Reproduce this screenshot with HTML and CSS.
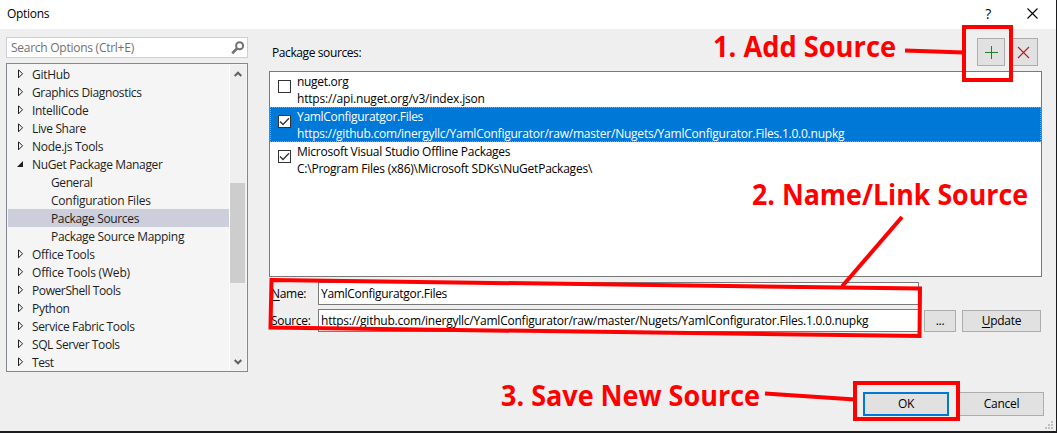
FILE: index.html
```html
<!DOCTYPE html>
<html lang="en">
<head>
<meta charset="utf-8">
<title>Options</title>
<link rel="stylesheet" href="styles.css">
</head>
<body>
<div class="dialog">
  <header class="titlebar">
    <span class="title">Options</span>
    <span class="help">?</span>
    <svg class="close" width="11" height="11" viewBox="0 0 11 11"><path d="M.5 .5l10 10M10.500 .5l-10 10"/></svg>
  </header>
  <main class="content">
    <aside class="sidebar">
      <div class="search">
        <span class="t-search">Search Options (Ctrl+E)</span>
        <svg width="14" height="14" viewBox="0 0 14 14"><circle cx="8.600" cy="4.700" r="3.500"/><path d="M6 7.500L1.200 12.300"/></svg>
      </div>
      <div class="tree">
        <ul class="nodes">
          <li><svg class="arrow" viewBox="0 0 6 10"><path d="M.5 .8v8l4-4z"/></svg><span>GitHub</span></li>
          <li><svg class="arrow" viewBox="0 0 6 10"><path d="M.5 .8v8l4-4z"/></svg><span class="tight">Graphics Diagnostics</span></li>
          <li><svg class="arrow" viewBox="0 0 6 10"><path d="M.5 .8v8l4-4z"/></svg><span>IntelliCode</span></li>
          <li><svg class="arrow" viewBox="0 0 6 10"><path d="M.5 .8v8l4-4z"/></svg><span class="tight">Live Share</span></li>
          <li><svg class="arrow" viewBox="0 0 6 10"><path d="M.5 .8v8l4-4z"/></svg><span>Node.js Tools</span></li>
          <li><svg class="arrow open" viewBox="0 0 6 6"><path d="M6 0v6H0z"/></svg><span class="tight">NuGet Package Manager</span></li>
          <li class="child"><span class="tighter">General</span></li>
          <li class="child"><span class="loose">Configuration Files</span></li>
          <li class="child selected"><span class="tight">Package Sources</span></li>
          <li class="child"><span>Package Source Mapping</span></li>
          <li><svg class="arrow" viewBox="0 0 6 10"><path d="M.5 .8v8l4-4z"/></svg><span class="loose">Office Tools</span></li>
          <li><svg class="arrow" viewBox="0 0 6 10"><path d="M.5 .8v8l4-4z"/></svg><span class="looser">Office Tools (Web)</span></li>
          <li><svg class="arrow" viewBox="0 0 6 10"><path d="M.5 .8v8l4-4z"/></svg><span class="tighter">PowerShell Tools</span></li>
          <li><svg class="arrow" viewBox="0 0 6 10"><path d="M.5 .8v8l4-4z"/></svg><span>Python</span></li>
          <li><svg class="arrow" viewBox="0 0 6 10"><path d="M.5 .8v8l4-4z"/></svg><span class="tight">Service Fabric Tools</span></li>
          <li><svg class="arrow" viewBox="0 0 6 10"><path d="M.5 .8v8l4-4z"/></svg><span class="tighter">SQL Server Tools</span></li>
          <li><svg class="arrow" viewBox="0 0 6 10"><path d="M.5 .8v8l4-4z"/></svg><span class="tighter">Test</span></li>
        </ul>
        <div class="scrollbar">
          <svg width="8" height="6" viewBox="0 0 8 6"><path d="M.7 5L4 1.700 7.300 5"/></svg>
          <div class="thumb"></div>
          <svg width="8" height="6" viewBox="0 0 8 6"><path d="M.7 1L4 4.300 7.300 1"/></svg>
        </div>
      </div>
    </aside>
    <section class="panel">
      <div class="toolbar">
        <span class="label tighter">Package sources:</span>
        <button class="tool add"><svg width="13" height="13" viewBox="0 0 13 13"><path d="M6.500 0v13M0 6.500h13"/></svg></button>
        <button class="tool remove"><svg width="13" height="13" viewBox="0 0 13 13"><path d="M1 1l11 11M12 1L1 12"/></svg></button>
      </div>
      <div class="sources">
        <div class="source">
          <span class="check"></span>
          <div class="lines"><span>nuget.org</span><span class="looser">https://api.nuget.org/v3/index.json</span></div>
        </div>
        <div class="source active">
          <span class="check"><svg width="11" height="11" viewBox="0 0 11 11"><path d="M1 5.500L4 8.500 10 2.300"/></svg></span>
          <div class="lines"><span>YamlConfiguratgor.Files</span><span class="link">https://github.com/inergyllc/YamlConfigurator/raw/master/Nugets/YamlConfigurator.Files.1.0.0.nupkg</span></div>
        </div>
        <div class="source">
          <span class="check"><svg width="11" height="11" viewBox="0 0 11 11"><path d="M1 5.500L4 8.500 10 2.300"/></svg></span>
          <div class="lines"><span class="loose">Microsoft Visual Studio Offline Packages</span><span class="link">C:\Program Files (x86)\Microsoft SDKs\NuGetPackages\</span></div>
        </div>
      </div>
      <div class="form">
        <span class="label"><span><u>N</u>ame:</span></span>
        <div class="field"><span>YamlConfiguratgor.Files</span></div>
        <span class="label second"><span><u>S</u>ource:</span></span>
        <div class="field"><span class="link">https://github.com/inergyllc/YamlConfigurator/raw/master/Nugets/YamlConfigurator.Files.1.0.0.nupkg</span></div>
        <button class="btn dots">...</button>
        <button class="btn update"><span><u>U</u>pdate</span></button>
      </div>
      <footer class="actions">
        <button class="btn ok">OK</button>
        <button class="btn cancel">Cancel</button>
      </footer>
    </section>
  </main>
  <svg class="grip" width="8" height="8" viewBox="0 0 8 8"><path d="M6 0h2v2H6zM3 3h2v2H3zM6 3h2v2H6zM0 6h2v2H0zM3 6h2v2H3zM6 6h2v2H6z"/></svg>
  <svg class="callouts" width="1057" height="433" viewBox="0 0 1057 433">
    <g class="strokes">
      <rect x="964" y="27" width="47" height="53"/>
      <path d="M905 50.500L964 52.500"/>
      <path d="M271.500 280L920 288.500 919.500 336 270.500 327.500z"/>
      <path d="M902 217L842 286.500"/>
      <rect x="855" y="383" width="103" height="36"/>
      <path d="M765 393.500L855 399.500"/>
    </g>
    <text x="713" y="57" textLength="183" lengthAdjust="spacingAndGlyphs">1. Add Source</text>
    <text x="752" y="205" textLength="276" lengthAdjust="spacingAndGlyphs">2. Name/Link Source</text>
    <text x="501" y="406" textLength="259" lengthAdjust="spacingAndGlyphs">3. Save New Source</text>
  </svg>
</div>
</body>
</html>
```
FILE: styles.css
```css
* { box-sizing: border-box; }
body { margin: 0; overflow: hidden; background: #1c1c1f; }
.dialog {
  position: relative;
  width: 1057px; height: 433px;
  display: flex; flex-direction: column;
  border-right: 1px solid #1c1c1f;
  border-bottom: 2px solid #1c1c1f;
  background: #efefef;
  font: 12px/16px "Open Sans", "Noto Sans", sans-serif;
  letter-spacing: -0.3px;
  color: #000;
}
span { white-space: nowrap; }
.loose { letter-spacing: -0.25px; }
.looser { letter-spacing: -0.18px; }
.link { letter-spacing: -0.23px; }
.tight { letter-spacing: -0.35px; }
.tighter { letter-spacing: -0.4px; }

.titlebar {
  height: 29px; flex: none;
  display: flex; align-items: center;
  padding: 0 18px 2px 7px;
  background: #fff;
}
.title { flex: 1; }
.help { margin-right: 36px; font-size: 14px; }
.close { fill: none; stroke: #000; stroke-width: 1.1; }
.content { flex: 1; display: flex; padding: 8px 14px 0 6px; gap: 21px; }

.sidebar { flex: none; width: 242px; display: flex; flex-direction: column; gap: 5px; }
.search {
  height: 21px;
  display: flex; align-items: center; justify-content: space-between;
  padding: 0 2px 0 4px;
  border: 1px solid #cccedb; background: #fff; color: #717171;
}
.search span { padding-top: 1px; letter-spacing: -0.26px; }
.search svg { fill: none; stroke: #717171; stroke-width: 2; }
.search svg path { stroke-width: 2.6; }
.tree {
  height: 309px;
  display: flex;
  padding: 1px;
  border: 1px solid #828790; background: #f5f5f5;
  color: #1e1e1e;
}
.nodes { flex: 1; margin: 0; padding: 0; list-style: none; }
.nodes li { height: 18px; display: flex; align-items: center; padding-left: 10px; }
.nodes span { padding-top: 2px; }
.arrow { width: 6px; height: 10px; margin-right: 8px; fill: none; stroke: #1e1e1e; }
.arrow.open { height: 6px; margin: 0 9px 0 -1px; fill: #1e1e1e; stroke: none; }
.nodes .child { padding-left: 43px; }
.nodes .selected { background: #cccedb; }
.scrollbar {
  width: 17px;
  display: flex; flex-direction: column; align-items: center;
  padding: 6px 1px 5px 0;
  border-left: 1px solid #fff; background: #efefef;
}
.scrollbar svg { fill: none; stroke: #606060; stroke-width: 2; }
.thumb { width: 15px; height: 100px; margin: 106px 0 auto; background: #cdcdcd; }

.panel { flex: 1; min-width: 0; display: flex; flex-direction: column; }
.toolbar { height: 34px; display: flex; padding: 1px 4px 0 3px; }
.toolbar .label { flex: 1; padding-top: 7px; }
.tool {
  width: 28px; height: 28px; padding: 0; margin-left: 5px;
  display: flex; align-items: center; justify-content: center;
  border: 1px solid #adadad; background: #e1e1e1;
}
.tool svg { fill: none; stroke: #1e8022; stroke-width: 1; }
.remove svg { stroke: #b4232f; stroke-width: 1.200; margin-left: -2px; }
.sources { width: 773px; height: 206px; border: 1px solid #7a7a7a; background: #fff; }
.source { height: 35px; display: flex; padding-left: 8px; gap: 6px; }
.active { background: #0078d7; color: #fff; outline: 1px dotted #f08a28; outline-offset: -1px; }
.check { width: 13px; height: 13px; margin-top: 8px; border: 1px solid #333; background: #fff; }
.check svg { display: block; fill: none; stroke: #333; stroke-width: 1.300; }
.lines { display: flex; flex-direction: column; padding-top: 1px; line-height: 17px; }

.form {
  margin-top: 5px;
  display: grid;
  grid-template-columns: 49px 601px 37px 85px;
  grid-template-rows: 23px 23px;
  row-gap: 4px;
}
.form .label { grid-column: 1; padding: 4px 0 0 2px; }
.field { grid-column: 2; height: 23px; padding: 3px 2px 2px; border: 1px solid #7a7a7a; background: #fff; }
.btn {
  padding: 0;
  border: 1px solid #adadad; background: #e1e1e1;
  font: inherit; letter-spacing: inherit; color: #000;
}
.dots { grid-area: 2 / 3; width: 32px; height: 22px; margin: 1px 0 0 5px; }
.update { grid-area: 2 / 4; width: 79px; height: 22px; margin: 1px 0 0 6px; }
.actions { display: flex; justify-content: flex-end; gap: 10px; margin: 60px -2px 0 0; }
.actions .btn { height: 24px; width: 86px; }
.actions .ok { border: 2px solid #0078d7; }
.actions .cancel { width: 85px; }
u { text-underline-offset: 2px; }

.grip { position: absolute; right: 3px; bottom: 2px; fill: #bfbfbf; }
.callouts { position: absolute; left: 0; top: 0; pointer-events: none; }
.strokes { fill: none; stroke: #f00; stroke-width: 4; }
.callouts text { font: bold 28px "Open Sans", "Noto Sans", sans-serif; letter-spacing: 0; fill: #f00; }
```
